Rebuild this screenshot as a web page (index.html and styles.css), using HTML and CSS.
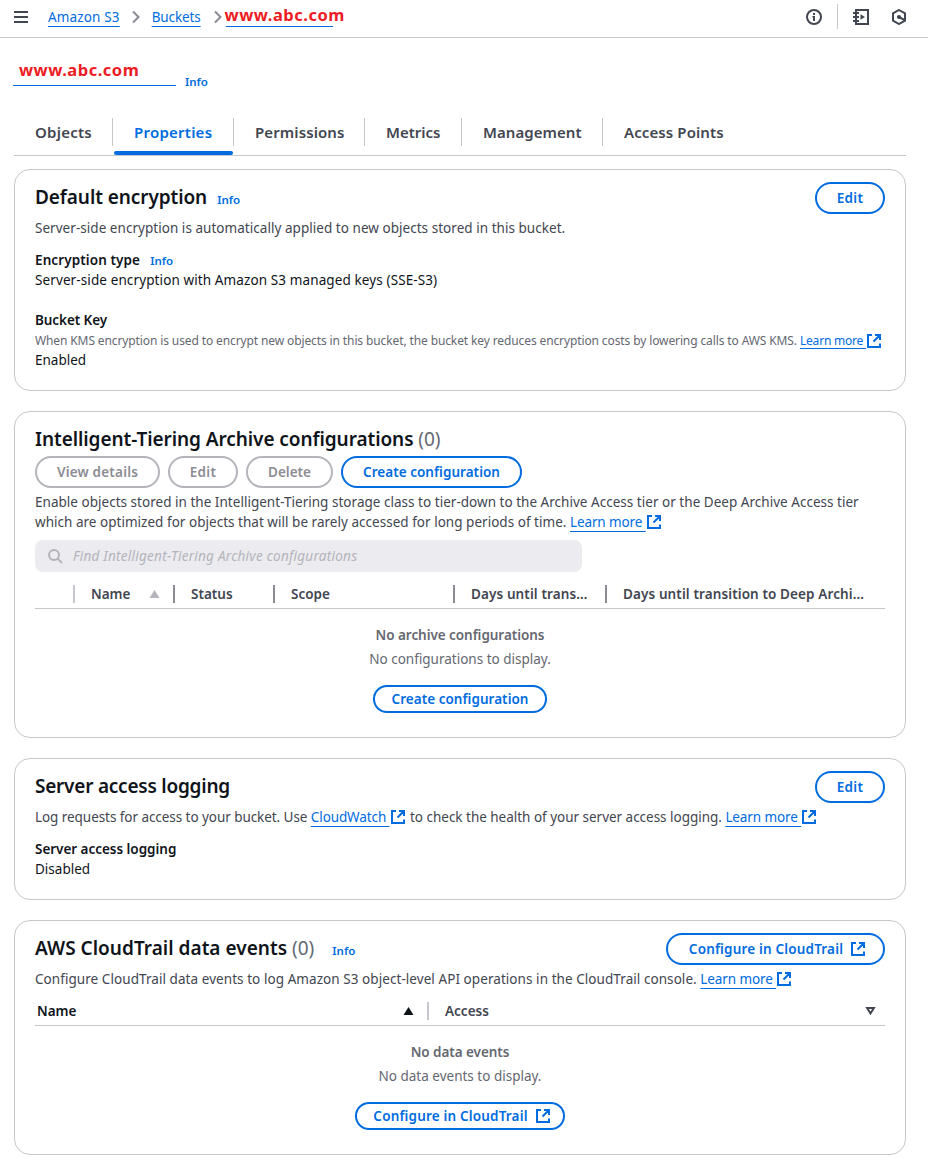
FILE: index.html
```html
<!DOCTYPE html>
<html lang="en">
<head>
<meta charset="utf-8">
<title>www.abc.com - S3 bucket</title>
<link rel="stylesheet" href="styles.css">
</head>
<body>
<svg class="defs" aria-hidden="true">
  <symbol id="external" viewBox="0 0 14 14"><path d="M5 1H1v12h12V9.5M8 1h5v5M13 1L6.5 7.5" fill="none" stroke="currentColor" stroke-width="2"/></symbol>
  <symbol id="chevron" viewBox="0 0 8 14"><path d="M1 1.5L6.5 7L1 12.5" fill="none" stroke="currentColor" stroke-width="2"/></symbol>
</svg>

<header class="topbar">
  <svg class="menu" viewBox="0 0 14 12"><path d="M0 1h14M0 6h14M0 11h14" stroke="currentColor" stroke-width="2"/></svg>
  <nav class="crumbs">
    <a class="link crumb-root">Amazon S3</a>
    <svg class="chev"><use href="#chevron"/></svg>
    <a class="link crumb-buckets">Buckets</a>
    <svg class="chev chev-last"><use href="#chevron"/></svg>
    <a class="crumb-name"><span class="site">www.abc.com</span></a>
  </nav>
  <div class="tools">
    <svg class="tool" viewBox="0 0 16 16"><circle cx="8" cy="8" r="7" fill="none" stroke="currentColor" stroke-width="2"/><path d="M7 4h2v2H7zM6.4 7H9v5H7V8.4h-.6z" fill="currentColor"/></svg>
    <span class="tool-sep"></span>
    <svg class="tool tool-book" viewBox="0 0 16 16"><path d="M3 4V1h12v14H3v-3M3 4v8" fill="none" stroke="currentColor" stroke-width="2"/><path d="M0 4h6M0 8h6M0 12h6" stroke="currentColor" stroke-width="1.8"/><path d="M7.500 5.200L12 8L7.500 10.800z" fill="currentColor"/></svg>
    <svg class="tool" viewBox="0 0 16 16"><path d="M8 1l6 3.400v7.200L8 15l-6-3.400V4.400z" fill="none" stroke="currentColor" stroke-width="2"/><circle cx="8" cy="8" r="2.100" fill="currentColor"/><path d="M8 8l6 3.300" stroke="currentColor" stroke-width="2"/></svg>
  </div>
</header>

<main class="page">
  <div class="title">
    <h1 class="title-name"><span class="site">www.abc.com</span></h1>
    <a class="info">Info</a>
  </div>

  <nav class="tabs">
    <a class="tab t-objects">Objects</a>
    <a class="tab t-properties active">Properties</a>
    <a class="tab t-permissions">Permissions</a>
    <a class="tab t-metrics">Metrics</a>
    <a class="tab t-management">Management</a>
    <a class="tab t-access">Access Points</a>
  </nav>

  <section class="card encryption">
    <div class="head">
      <h2>Default encryption</h2><a class="info">Info</a>
      <button class="btn push">Edit</button>
    </div>
    <p class="desc">Server-side encryption is automatically applied to new objects stored in this bucket.</p>
    <div class="field">
      <div class="label"><span>Encryption type</span><a class="info">Info</a></div>
      <div class="value managed">Server-side encryption with Amazon S3 managed keys (SSE-S3)</div>
    </div>
    <div class="field second">
      <div class="label label-key">Bucket Key</div>
      <div class="hint">When KMS encryption is used to encrypt new objects in this bucket, the bucket key reduces encryption costs by lowering calls to AWS KMS. <a class="link">Learn more&nbsp;</a><svg class="ext"><use href="#external"/></svg></div>
      <div class="value">Enabled</div>
    </div>
  </section>

  <section class="card tiering">
    <div class="head"><h2>Intelligent-Tiering Archive configurations <span class="count">(0)</span></h2></div>
    <div class="actions">
      <button class="btn off b-view">View details</button>
      <button class="btn off">Edit</button>
      <button class="btn off b-delete">Delete</button>
      <button class="btn b-create">Create configuration</button>
    </div>
    <p class="desc">Enable objects stored in the Intelligent-Tiering storage class to tier-down to the Archive Access tier or the Deep Archive Access tier<br>which are optimized for objects that will be rarely accessed for long periods of time. <a class="link">Learn more&nbsp;</a><svg class="ext"><use href="#external"/></svg></p>
    <div class="search">
      <svg class="mag" viewBox="0 0 15 15"><circle cx="6" cy="6" r="5" fill="none" stroke="currentColor" stroke-width="2"/><path d="M9.600 9.600L14 14" stroke="currentColor" stroke-width="2"/></svg>
      <span>Find Intelligent-Tiering Archive configurations</span>
    </div>
    <div class="thead cols-five">
      <div class="th"></div>
      <div class="th pale">Name<svg class="tri" viewBox="0 0 10 8"><path d="M5 0l5 8H0z" fill="currentColor"/></svg></div>
      <div class="th">Status</div>
      <div class="th">Scope</div>
      <div class="th th-days">Days until trans…</div>
      <div class="th th-days">Days until transition to Deep Archi…</div>
    </div>
    <div class="empty">
      <b>No archive configurations</b>
      <p>No configurations to display.</p>
      <button class="btn small b-create-small">Create configuration</button>
    </div>
  </section>

  <section class="card logging">
    <div class="head">
      <h2>Server access logging</h2>
      <button class="btn push">Edit</button>
    </div>
    <p class="desc">Log requests for access to your bucket. Use <a class="link">CloudWatch&nbsp;</a><svg class="ext"><use href="#external"/></svg><span class="rest"> to check the health of your server access logging. </span><a class="link">Learn more&nbsp;</a><svg class="ext"><use href="#external"/></svg></p>
    <div class="field">
      <div class="label">Server access logging</div>
      <div class="value">Disabled</div>
    </div>
  </section>

  <section class="card trail">
    <div class="head">
      <h2>AWS CloudTrail data events <span class="count">(0)</span></h2><a class="info">Info</a>
      <button class="btn push b-trail">Configure in CloudTrail<svg class="ext"><use href="#external"/></svg></button>
    </div>
    <p class="desc">Configure CloudTrail data events to log Amazon S3 object-level API operations in the CloudTrail console. <a class="link">Learn more&nbsp;</a><svg class="ext"><use href="#external"/></svg></p>
    <div class="thead cols-two">
      <div class="th sorted">Name<svg class="tri" viewBox="0 0 10 8"><path d="M5 0l5 8H0z" fill="currentColor"/></svg></div>
      <div class="th pale">Access<svg class="tri" viewBox="0 0 10 8"><path d="M1.600 1h6.800L5 6.400z" fill="none" stroke="currentColor" stroke-width="2"/></svg></div>
    </div>
    <div class="empty">
      <b>No data events</b>
      <p>No data events to display.</p>
      <button class="btn small b-trail-small">Configure in CloudTrail<svg class="ext"><use href="#external"/></svg></button>
    </div>
  </section>
</main>
</body>
</html>
```
FILE: styles.css
```css
* { box-sizing: border-box; margin: 0; padding: 0; }
body {
  font: 13.5px/20px "Noto Sans", sans-serif;
  color: #0f141a;
  background: #fff;
}
.defs { position: absolute; width: 0; height: 0; }

.link {
  color: #006ce0;
  text-decoration: underline 1px;
  text-underline-offset: 4px;
  text-decoration-skip-ink: none;
}
.site { color: #ed1c24; font-weight: 700; font-size: 16.5px; letter-spacing: 0.5px; }
.info { color: #006ce0; font-size: 11.5px; font-weight: 600; }

/* Top bar */
.topbar {
  display: flex;
  align-items: center;
  height: 38px;
  padding: 0 21px 4px 14px;
  border-bottom: 1px solid #c6c6cd;
}
.menu { width: 14px; height: 12px; color: #424650; }
.crumbs { display: flex; align-items: center; margin-left: 20px; }
.chev { width: 8px; height: 14px; margin: 0 12px; color: #8c8c94; }
.chev-last { margin: 0 4px 0 13px; }
.crumb-root { letter-spacing: 0.15px; }
.crumb-buckets { letter-spacing: -0.12px; }
.crumb-name {
  width: 107px;
  height: 20px;
  border-bottom: 1px solid #006ce0;
  line-height: 16px;
  white-space: nowrap;
}
.crumb-name .site { margin-left: -1px; }
.tools { display: flex; align-items: center; margin-left: auto; color: #424650; }
.tool { width: 16px; height: 16px; }
.tool-sep { width: 1px; height: 25px; margin: 0 15px; background: #c6c6cd; }
.tool-book { margin-right: 22px; }

.page { padding: 21px 22px 12px 14px; }

/* Bucket title */
.title { display: flex; margin-left: -1px; height: 34px; }
.title-name {
  width: 163px;
  height: 27px;
  padding-left: 6px;
  border-bottom: 1px solid #006ce0;
  line-height: 21px;
  font-size: 16.5px;
}
.title .info { margin: 13px 0 0 9px; }

/* Tabs */
.tabs { display: flex; height: 63px; padding-top: 25px; border-bottom: 1px solid #c6c6cd; }
.tab {
  height: 28px;
  padding-left: 21px;
  line-height: 28px;
  border-right: 1px solid #c6c6cd;
  color: #424650;
  font-size: 15px;
  font-weight: 600;
  letter-spacing: 0.1px;
  white-space: nowrap;
}
.t-objects { width: 99px; letter-spacing: 0.25px; }
.t-properties { width: 121px; letter-spacing: 0.24px; }
.t-permissions { width: 131px; }
.t-metrics { width: 97px; letter-spacing: 0; }
.t-management { width: 141px; letter-spacing: 0.05px; }
.t-access { width: 141px; border-right: 0; }
.active { color: #006ce0; }
.active::after {
  content: "";
  position: absolute;
  top: 151px;
  left: 114px;
  width: 119px;
  height: 4px;
  border-radius: 2px;
  background: #006ce0;
}

/* Cards */
.card { padding: 12px 20px 20px; border: 1px solid #c6c6cd; border-radius: 16px; }
.card + .card { margin-top: 20px; }
.encryption { height: 222px; }
.tiering { height: 327px; }
.logging { height: 142px; }
.trail { height: 235px; }
.tabs + .card { margin-top: 13px; }

.head { display: flex; align-items: center; height: 32px; }
.head .info { margin: 3px 0 0 10px; }
.trail .head .info { margin-left: 18px; }
h2 { font-size: 19px; line-height: 24px; font-weight: 600; padding-bottom: 2px; letter-spacing: -0.08px; white-space: nowrap; }
.tiering h2 { padding-bottom: 0; letter-spacing: -0.07px; }
.logging h2 { letter-spacing: -0.23px; }
.trail h2 { letter-spacing: 0.02px; }
.count { color: #656871; font-weight: 400; }
.push { margin-left: auto; }

.btn {
  display: flex;
  align-items: center;
  justify-content: center;
  gap: 7px;
  width: 70px;
  height: 32px;
  border: 2px solid #006ce0;
  border-radius: 16px;
  background: #fff;
  color: #006ce0;
  font: 600 13.5px/20px "Noto Sans", sans-serif;
  letter-spacing: 0.3px;
  white-space: nowrap;
}
.off { border-color: #b4b4bb; color: #8c8c94; }
.small { height: 28px; border-radius: 14px; }
.b-view { width: 125px; letter-spacing: 0.2px; }
.b-delete { width: 87px; letter-spacing: 0; }
.b-create { width: 181px; letter-spacing: 0.04px; }
.b-create-small { width: 174px; letter-spacing: 0.04px; }
.b-trail { width: 219px; padding-left: 3px; letter-spacing: 0.17px; }
.b-trail-small { width: 210px; padding-left: 3px; letter-spacing: 0.17px; }

.ext { width: 14px; height: 14px; color: #006ce0; vertical-align: -2px; margin-left: 1px; }

.desc { margin-top: 4px; color: #424650; letter-spacing: 0.04px; white-space: nowrap; }
.desc .link { letter-spacing: -0.11px; }
.tiering .desc { letter-spacing: 0.025px; }
.logging .desc { letter-spacing: -0.06px; }
.logging .rest { margin-left: 2px; letter-spacing: -0.02px; }
.trail .desc { letter-spacing: 0.063px; }
.field { margin-top: 12px; }
.second { margin-top: 20px; }
.label { height: 20px; font-weight: 600; letter-spacing: 0.1px; }
.logging .label { letter-spacing: -0.03px; }
.label-key { letter-spacing: -0.08px; }
.label .info { margin-left: 10px; letter-spacing: 0; }
.managed { letter-spacing: 0.11px; }
.hint { height: 20px; padding-top: 1px; color: #656871; font-size: 12px; letter-spacing: -0.115px; white-space: nowrap; }
.hint .link { text-underline-offset: 3px; letter-spacing: -0.2px; }
.hint .ext { vertical-align: -3px; }

/* Intelligent tiering */
.tiering .head { height: 30px; }
.tiering .actions { margin-top: 2px; }
.actions { display: flex; gap: 8px; }
.search {
  display: flex;
  align-items: center;
  gap: 10px;
  width: 547px;
  height: 32px;
  margin-top: 8px;
  padding-left: 13px;
  border-radius: 8px;
  background: #ebebf0;
  color: #b4b4bb;
  font-style: italic;
  letter-spacing: 0.26px;
  white-space: nowrap;
}
.mag { width: 15px; height: 15px; }

.thead { display: grid; height: 37px; border-bottom: 1px solid #c6c6cd; color: #424650; font-weight: 600; }
.cols-five { grid-template-columns: 38px 100px 100px 180px 152px 280px; padding-top: 13px; }
.th {
  display: flex;
  align-items: center;
  height: 18px;
  padding-left: 16px;
  border-left: 2px solid #8c8c94;
  white-space: nowrap;
}
.th:first-child { border-left: 0; }
.th.pale { border-left-color: #c6c6cd; }
.th-days { letter-spacing: 0.11px; }
.tri { width: 11px; height: 8px; margin-left: auto; margin-right: 13px; }
.cols-five .tri { color: #b4b4bb; }
.cols-two { grid-template-columns: 392px 1fr; padding-top: 13px; }
.cols-two .sorted { padding-left: 2px; color: #0f141a; }
.cols-two .th + .th .tri { margin-right: 9px; }

.empty { display: flex; flex-direction: column; align-items: center; padding-top: 16px; color: #656871; }
.empty b { font-weight: 600; letter-spacing: -0.05px; }
.empty p { margin: 4px 0 16px; }
```
